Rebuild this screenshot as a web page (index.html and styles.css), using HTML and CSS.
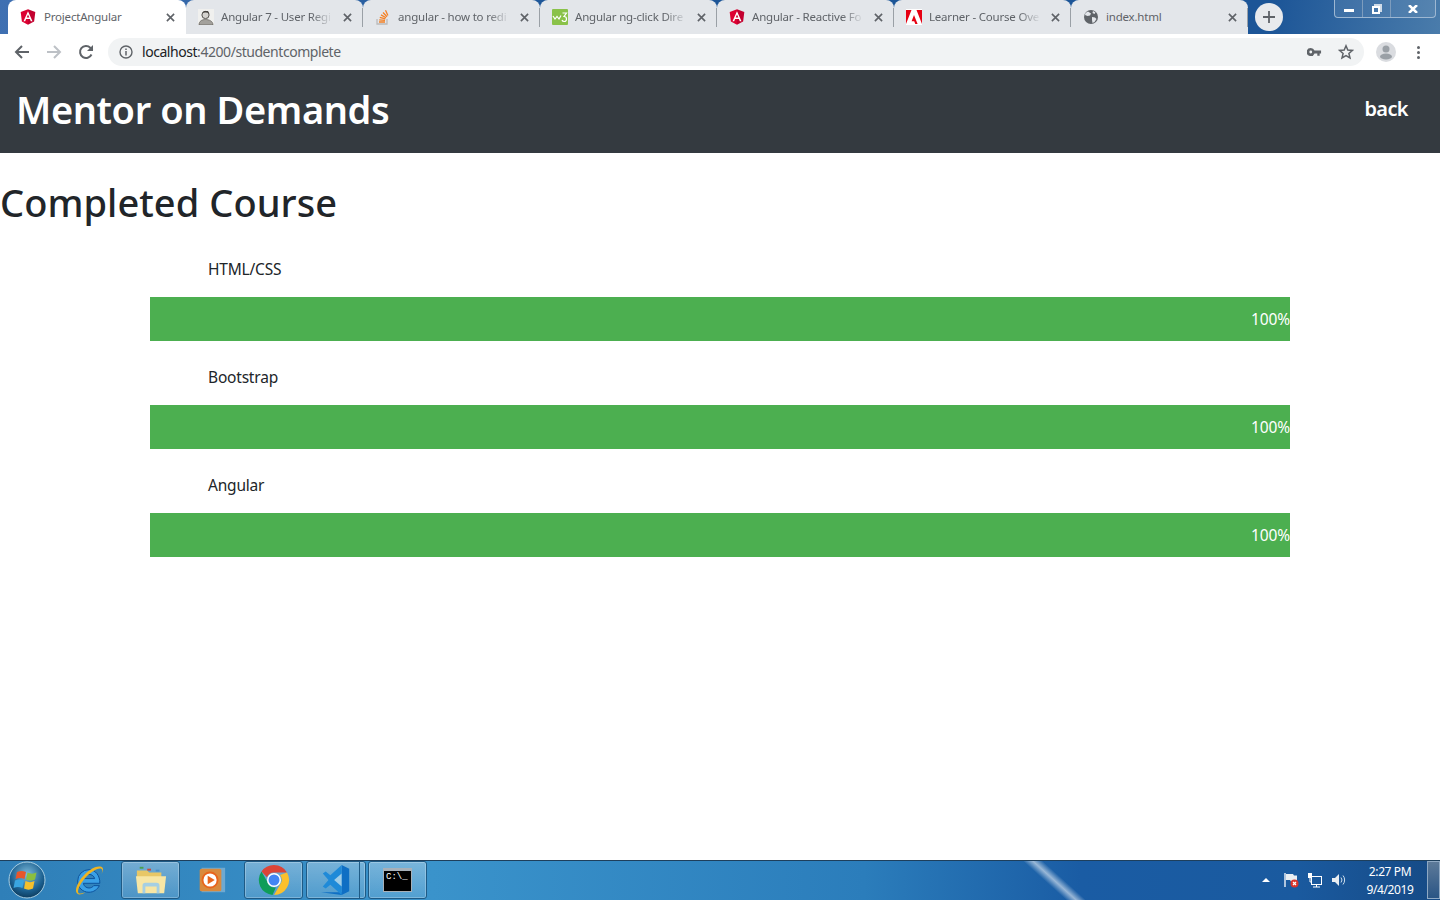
FILE: index.html
```html
<!DOCTYPE html>
<html lang="en">
<head>
    <meta charset="UTF-8">
    <title>ProjectAngular</title>
    <link rel="stylesheet" href="styles.css">
</head>
<body>

    <!-- Browser chrome -->
    <div class="tab-strip">
        <div class="tab active">
            <svg class="fav" viewBox="0 0 16 16"><path d="M8 .3 .7 2.9l1.2 9.500L8 15.700z" fill="#dd0031"/><path d="M8 .3v15.400l6.100-3.300 1.200-9.500z" fill="#c3002f"/><path fill-rule="evenodd" d="M8 2.200 3.500 12.200h1.700l.9-2.200h3.800l.9 2.200h1.700zM8 5.400l1.300 3.200H6.700z" fill="#fff"/></svg>
            <span class="tab-title">ProjectAngular</span>
            <svg class="tab-x" viewBox="0 0 10 10"><path d="M1 1l8 8M9 1 1 9"/></svg>
        </div>
        <div class="tab">
            <svg class="fav" viewBox="0 0 16 16"><rect width="16" height="16" fill="#f0f0ee"/><circle cx="7.5" cy="6" r="3.6" fill="#d5d3cf" stroke="#55524e"/><path d="M4 4.500 6 2h4l1.500 3-2-1.500H6z" fill="#46433f"/><path d="M1 16c0-4 3-5.500 6.500-5.500S15 12 15 16z" fill="#a3a19c" stroke="#55524e" stroke-width=".6"/></svg>
            <span class="tab-title fade">Angular 7 - User Regi</span>
            <svg class="tab-x" viewBox="0 0 10 10"><path d="M1 1l8 8M9 1 1 9"/></svg>
        </div>
        <div class="tab">
            <svg class="fav" viewBox="0 0 16 16"><path d="M2 10v5h10v-5" fill="none" stroke="#bcbbbb" stroke-width="1.300"/><path d="M4 13h6M4.200 10.800l5.800.6M4.800 8.400l5.600 1.500M6 5.900l5 2.800M8 3.500l4 4.200M10.500 1.200l2.400 5.300" fill="none" stroke="#f48024" stroke-width="1.300"/></svg>
            <span class="tab-title fade">angular - how to redi</span>
            <svg class="tab-x" viewBox="0 0 10 10"><path d="M1 1l8 8M9 1 1 9"/></svg>
        </div>
        <div class="tab">
            <svg class="fav" viewBox="0 0 16 16"><rect width="16" height="16" rx="1" fill="#8ac249"/><path d="M1 7l2 3 2-2.500L7 10l2-3.500M10.500 4h4l-2.500 3.500c2 0 2.500 1.200 2.500 2.500s-1 2.500-2.300 2.500-2-.8-2.200-1.500" fill="none" stroke="#fff" stroke-width="1.200"/></svg>
            <span class="tab-title fade">Angular ng-click Dire</span>
            <svg class="tab-x" viewBox="0 0 10 10"><path d="M1 1l8 8M9 1 1 9"/></svg>
        </div>
        <div class="tab">
            <svg class="fav" viewBox="0 0 16 16"><path d="M8 .3 .7 2.900l1.200 9.500L8 15.700z" fill="#dd0031"/><path d="M8 .3v15.400l6.100-3.300 1.200-9.500z" fill="#c3002f"/><path fill-rule="evenodd" d="M8 2.200 3.500 12.200h1.700l.9-2.200h3.800l.9 2.200h1.700zM8 5.400l1.300 3.200H6.700z" fill="#fff"/></svg>
            <span class="tab-title fade">Angular - Reactive Fo</span>
            <svg class="tab-x" viewBox="0 0 10 10"><path d="M1 1l8 8M9 1 1 9"/></svg>
        </div>
        <div class="tab">
            <svg class="fav" viewBox="0 0 16 16"><rect width="16" height="16" fill="#fff"/><path d="M0 1h5.500L0 15zM16 1h-5.500L16 15zM8 6l3.600 9H9.300L8.200 12.300H5.600z" fill="#e60012"/></svg>
            <span class="tab-title fade">Learner - Course Ove</span>
            <svg class="tab-x" viewBox="0 0 10 10"><path d="M1 1l8 8M9 1 1 9"/></svg>
        </div>
        <div class="tab">
            <svg class="fav" viewBox="0 0 16 16"><circle cx="8" cy="8" r="7" fill="#5f6368"/><path d="M5 2.500 8 4.500 7 6.500 4.500 7 2 6l.5-2zM9 8l3 .5 1.500 1.500-2 3-2 1-.5-3zM10 2l2.500 1.500-1 1.500L9.500 4z" fill="#e3e6ea"/></svg>
            <span class="tab-title">index.html</span>
            <svg class="tab-x" viewBox="0 0 10 10"><path d="M1 1l8 8M9 1 1 9"/></svg>
        </div>
        <div class="new-tab">
            <svg viewBox="0 0 12 12"><path d="M6 0v12M0 6h12"/></svg>
        </div>
        <div class="win-controls">
            <div class="win-btn min"><span class="min-bar"></span></div>
            <div class="win-btn restore"><span class="restore-box"></span></div>
            <div class="win-btn close">
                <svg viewBox="0 0 10 8"><path d="M1 0l8 8M9 0 1 8"/></svg>
            </div>
        </div>
    </div>

    <div class="toolbar">
        <svg class="tool-icon" viewBox="0 0 16 16"><path d="M15 8H2M8 2 2 8l6 6" fill="none" stroke="#5f6368" stroke-width="2"/></svg>
        <svg class="tool-icon" viewBox="0 0 16 16"><path d="M1 8h13M8 2l6 6-6 6" fill="none" stroke="#bdc1c6" stroke-width="2"/></svg>
        <svg class="tool-icon" viewBox="0 0 16 16"><path d="M13.500 10.500A6 6 0 1 1 12.300 3.700L14.500 6" fill="none" stroke="#5f6368" stroke-width="2"/><path d="M15 1v6H9z" fill="#5f6368"/></svg>
        <div class="omnibox">
            <svg class="info" viewBox="0 0 14 14"><circle cx="7" cy="7" r="6" fill="none" stroke="#5f6368" stroke-width="1.400"/><path d="M7 6v4.500M7 3.400v1.500" stroke="#5f6368" stroke-width="1.500"/></svg>
            <span class="url"><span class="host">localhost</span>:4200/studentcomplete</span>
            <svg class="key" viewBox="0 0 16 10"><path fill-rule="evenodd" d="M4 .7a4.300 4.300 0 1 0 4 5.800h3v2.500h2.500V6.500H15V3.500H8A4.300 4.300 0 0 0 4 .7zM4 3.500a1.500 1.500 0 1 1 0 3 1.500 1.500 0 0 1 0-3z" fill="#5f6368"/></svg>
            <svg class="star" viewBox="0 0 16 16"><path d="M8 1.800 9.800 6l4.600.4-3.500 3 1.100 4.500L8 11.500l-4 2.400 1.100-4.500-3.500-3L6.200 6z" fill="none" stroke="#5f6368" stroke-width="1.500"/></svg>
        </div>
        <div class="avatar">
            <svg viewBox="0 0 20 20"><circle cx="10" cy="10" r="10" fill="#dadce0"/><circle cx="10" cy="7" r="3.500" fill="#9aa0a6"/><ellipse cx="10" cy="14.500" rx="6" ry="3" fill="#9aa0a6"/></svg>
        </div>
        <div class="kebab"><i></i><i></i><i></i></div>
    </div>

    <!-- Page -->
    <nav class="navbar">
        <a class="brand">Mentor on Demands</a>
        <a class="back">back</a>
    </nav>

    <main class="content">
        <h1>Completed Course</h1>
        <div class="course-list">
            <div class="course">
                <p class="course-name">HTML/CSS</p>
                <div class="progress"><div class="progress-bar" style="width: 100%">100%</div></div>
            </div>
            <div class="course">
                <p class="course-name">Bootstrap</p>
                <div class="progress"><div class="progress-bar" style="width: 100%">100%</div></div>
            </div>
            <div class="course">
                <p class="course-name">Angular</p>
                <div class="progress"><div class="progress-bar" style="width: 100%">100%</div></div>
            </div>
        </div>
    </main>

    <!-- Windows taskbar -->
    <div class="taskbar">
        <div class="tb-start">
            <svg viewBox="0 0 38 38">
                <defs>
                    <radialGradient id="orb" cx="50%" cy="35%" r="65%"><stop offset="0" stop-color="#7fbcdc"/><stop offset=".7" stop-color="#1b5f8f"/><stop offset="1" stop-color="#0d3c5e"/></radialGradient>
                </defs>
                <circle cx="19" cy="19" r="18" fill="url(#orb)" stroke="#a9cfe3" stroke-width="1"/>
                <path d="M9 11c3-1.500 6-1.500 9 0l-1.500 7c-3-1.500-6-1.500-9 0z" fill="#e8562a"/>
                <path d="M19.500 11.500c3 1.500 6 1.500 9 0l-1.500 7c-3 1.500-6 1.500-9 0z" fill="#8bbf3f"/>
                <path d="M7 19.500c3-1.500 6-1.500 9 0L14.500 27c-3-1.500-6-1.500-9 0z" fill="#3aa5e0"/>
                <path d="M17.500 20c3 1.500 6 1.500 9 0L25 27.500c-3 1.500-6 1.500-9 0z" fill="#f5c02c"/>
            </svg>
        </div>
        <div class="tb-item ie">
            <svg viewBox="0 0 34 34"><path fill-rule="evenodd" d="M17 6a12 12 0 0 0-12 12c0 7 5 12 12 12 5 0 9-3 11-7h-6c-1 1.500-3 2.500-5 2.500-3 0-5.500-2-6-5h17.500c.3-8-4.500-14.500-11.500-14.500zM11 15.500c.5-2.500 3-4.500 6-4.500s5.500 2 6 4.500z" fill="#3aa0e6" stroke="#0b4f9a"/><path d="M30 3c-5-2-14 3-21 12C4 22 1 29 5 32c2 1 5 0 8-2-3 1-6 2-7 1-2-2 1-9 6-15C18 9 26 4 30 5c2 1 1 4 0 6 2-3 3-7 0-8z" fill="#eeb422"/></svg>
        </div>
        <div class="tb-item open folder">
            <svg viewBox="0 0 34 34"><path d="M2 7h11l2 2h13v6H2z" fill="#e8c766"/><rect x="5" y="3" width="4" height="2" fill="#4aa14a"/><rect x="13" y="5" width="4" height="2" fill="#c94a3a"/><rect x="22" y="6" width="4" height="2" fill="#4a90c9"/><path d="M1 13h32l-2 18H3z" fill="#f7e6a5"/><path d="M8 31v-8q0-3 3-3h12q3 0 3 3v8h-3v-7H11v7z" fill="#a5cfe3"/></svg>
        </div>
        <div class="tb-item wmp">
            <svg viewBox="0 0 34 34"><rect x="7" y="4" width="25" height="26" fill="#6fa9d0"/><rect x="5" y="5" width="23" height="24" rx="2" fill="#d98a3d"/><circle cx="16" cy="17" r="9" fill="#e8641c"/><circle cx="16" cy="17" r="7" fill="#fff"/><path d="M13.500 12.500v9l7.500-4.500z" fill="#e8641c"/></svg>
        </div>
        <div class="tb-item open chrome">
            <svg viewBox="0 0 32 32"><path d="M16 1a15 15 0 0 1 13 7.500H16a7.500 7.500 0 0 0-7 4.800L3.500 7.500A15 15 0 0 1 16 1z" fill="#db4437"/><path d="M29 8.500A15 15 0 0 1 16 31l6.500-11.200A7.500 7.500 0 0 0 22 11z" fill="#fbc02d"/><path d="M3.500 7.500 9.800 18.700a7.500 7.500 0 0 0 8 4.800L14.500 31A15 15 0 0 1 3.500 7.500z" fill="#0f9d58"/><circle cx="16" cy="16" r="7" fill="#fff"/><circle cx="16" cy="16" r="5.500" fill="#4285f4"/></svg>
        </div>
        <div class="tb-item open vscode">
            <svg viewBox="0 0 34 34"><path d="M23 1l8 4v24l-8 4-22-3 22 0z" fill="#0f6fc4"/><path d="M23 1v32L11 22l-5 4-3-2 6-7-6-7 3-2 5 4z" fill="#1f8ad8"/><path d="M23 10l-8 7 8 7z" fill="#9fcde8"/></svg>
            <span class="stack"></span>
        </div>
        <div class="tb-item open cmd">
            <div class="cmd-win"><span class="cmd-text">C:\_</span></div>
        </div>

        <div class="tray">
            <svg class="tray-arrow" viewBox="0 0 8 4"><path d="M4 0l4 4H0z" fill="#fff"/></svg>
            <svg class="tray-icon" viewBox="0 0 16 16"><path d="M2 1v14" stroke="#fff" stroke-width="1.300"/><path d="M3 2h7l1 1.500h3v6H8L7 8H3z" fill="#e9eef2"/><circle cx="11.500" cy="11.500" r="4" fill="#d9342b"/><path d="M10 10l3 3M13 10l-3 3" stroke="#fff" stroke-width="1.200"/></svg>
            <svg class="tray-icon" viewBox="0 0 16 16"><rect x="4.500" y="4.500" width="10" height="8" fill="none" stroke="#fff"/><path d="M6 15h7M9.500 13v2" stroke="#fff"/><rect x="1" y="1" width="4" height="5" fill="#fff"/><path d="M3 6v4h1" stroke="#fff" fill="none"/></svg>
            <svg class="tray-icon" viewBox="0 0 16 16"><path d="M1 6h3l4-4v12l-4-4H1z" fill="#e9eef2"/><path d="M10 5.500a4 4 0 0 1 0 5M12 3.500a7 7 0 0 1 0 9" fill="none" stroke="#cfe0ee"/></svg>
            <div class="clock"><span>2:27 PM</span><span>9/4/2019</span></div>
            <div class="show-desktop"></div>
        </div>
    </div>

</body>
</html>
```

FILE: styles.css
```css
html, body {
    height: 100%;
}
body {
    font-family: "Noto Sans", "Open Sans", sans-serif;
    margin: 0;
    padding: 0;
    height: 100vh;
    overflow: hidden;
    display: flex;
    flex-direction: column;
    background-color: #fff;
    color: #212529;
}

/* tabs */
.tab-strip {
    height: 34px;
    flex: none;
    display: flex;
    padding-left: 8px;
    background: linear-gradient(100deg, #3f70b2 0, #1c5597 40%, #1c5597 88%, #4a7cab 100%);
}
.tab {
    width: 177px;
    height: 34px;
    box-sizing: border-box;
    display: flex;
    align-items: center;
    padding: 0 11px 0 12px;
    background-color: #e3e6ea;
    border-radius: 8px 8px 0 0;
    position: relative;
    color: #5f6368;
    font-size: 11.5px;
    letter-spacing: -0.2px;
}
.tab.active {
    width: 178px;
    background-color: #fff;
}
.tab::after {
    content: "";
    position: absolute;
    right: 0;
    top: 8px;
    height: 19px;
    width: 1px;
    background-color: #9aa0a6;
}
.tab.active::after, .tab:last-of-type::after {
    display: none;
}
.fav {
    width: 16px;
    height: 16px;
    flex: none;
    margin-right: 7px;
}
.active .fav {
    margin-right: 8px;
}
.tab-title {
    flex: 1;
    white-space: nowrap;
    overflow: hidden;
    padding-bottom: 2px;
}
.tab-title.fade {
    -webkit-mask-image: linear-gradient(90deg, #000 80%, transparent 100%);
    mask-image: linear-gradient(90deg, #000 80%, transparent 100%);
}
.tab-x {
    width: 9px;
    height: 9px;
    flex: none;
    margin-left: 10px;
    fill: none;
    stroke: #5f6368;
    stroke-width: 1.8;
}
.new-tab {
    width: 28px;
    height: 28px;
    margin: 3px 0 0 7px;
    border-radius: 50%;
    background-color: #e8eaed;
    display: flex;
    align-items: center;
    justify-content: center;
}
.new-tab svg {
    width: 12px;
    height: 12px;
    fill: none;
    stroke: #5f6368;
    stroke-width: 1.8;
}
.win-controls {
    margin-left: auto;
    margin-right: 4px;
    width: 102px;
    height: 18px;
    box-sizing: border-box;
    display: flex;
    border: 1px solid #9db7d2;
    border-top: none;
    border-radius: 0 0 4px 4px;
    background-color: rgba(255, 255, 255, 0.08);
}
.win-btn {
    display: flex;
    align-items: center;
    justify-content: center;
    height: 100%;
    box-sizing: border-box;
    border-right: 1px solid #7d9cbd;
}
.win-btn.min, .win-btn.restore {
    width: 28px;
}
.win-btn.close {
    flex: 1;
    border-right: none;
}
.min-bar {
    width: 10px;
    height: 3px;
    background-color: #fff;
    margin-top: 4px;
}
.restore-box {
    width: 4px;
    height: 4px;
    margin: 3px 2px 0 0;
    border: 2px solid #fff;
    box-shadow: 2px -2px 0 0 #cfdbe8;
}
.win-btn.close svg {
    width: 10px;
    height: 8px;
    fill: none;
    stroke: #fff;
    stroke-width: 2.5;
}

/* toolbar */
.toolbar {
    height: 36px;
    flex: none;
    box-sizing: border-box;
    display: flex;
    align-items: center;
    background-color: #fff;
    padding: 0 0 0 14px;
}
.tool-icon {
    width: 16px;
    height: 16px;
    flex: none;
    margin-right: 16px;
}
.omnibox {
    width: 1256px;
    height: 28px;
    margin-left: -2px;
    flex: none;
    box-sizing: border-box;
    display: flex;
    align-items: center;
    padding: 0 10px 0 11px;
    border-radius: 14px;
    background-color: #f1f3f4;
    font-size: 14px;
    letter-spacing: -0.45px;
}
.info {
    width: 14px;
    height: 14px;
    margin-right: 9px;
}
.url {
    flex: 1;
    color: #5f6368;
    padding-bottom: 1px;
}
.host {
    color: #202124;
}
.key {
    width: 15px;
    height: 10px;
    margin-right: 16px;
}
.star {
    width: 16px;
    height: 16px;
}
.avatar {
    width: 20px;
    height: 20px;
    margin-left: 12px;
}
.avatar svg {
    display: block;
    width: 20px;
    height: 20px;
}
.kebab {
    margin-left: 21px;
    display: flex;
    flex-direction: column;
    gap: 2px;
}
.kebab i {
    display: block;
    width: 3px;
    height: 3px;
    border-radius: 50%;
    background-color: #5f6368;
}

/* page */
.navbar {
    height: 83px;
    flex: none;
    box-sizing: border-box;
    display: flex;
    align-items: center;
    justify-content: space-between;
    padding: 0 32px 5px 16px;
    background-color: #343a40;
    color: #fff;
}
.brand {
    font-size: 38px;
    font-weight: 600;
    letter-spacing: -0.4px;
}
.back {
    font-size: 20px;
    font-weight: 600;
    letter-spacing: -0.6px;
    margin-bottom: 2px;
}
.content {
    flex: 1;
    min-height: 0;
}
h1 {
    margin: 21px 0 0 0;
    font-size: 38px;
    font-weight: 500;
    line-height: 56px;
    letter-spacing: 0.05px;
}
.course-list {
    width: 1140px;
    margin: 19px auto 0;
}
.course {
    margin-bottom: 16px;
}
.course-name {
    margin: 0;
    padding-left: 58px;
    height: 48px;
    line-height: 40px;
    font-size: 15.5px;
    letter-spacing: -0.2px;
}
.progress {
    height: 44px;
    background-color: #f1f1f1;
}
.progress-bar {
    height: 100%;
    background-color: #4caf50;
    color: #fff;
    text-align: right;
    line-height: 44px;
    font-size: 15.5px;
    letter-spacing: -0.1px;
}

/* taskbar */
.taskbar {
    height: 40px;
    flex: none;
    box-sizing: border-box;
    display: flex;
    align-items: stretch;
    padding-bottom: 1px;
    position: relative;
    overflow: hidden;
    background: linear-gradient(90deg, #2f7fb8 0, #3a93cb 30%, #2b7dbb 60%, #1a5ca4 75%, #1a5a9f 90%, #164a85 100%);
    border-top: 1px solid #1e3f5c;
}
.taskbar::before {
    content: "";
    position: absolute;
    left: 1045px;
    top: 0;
    width: 20px;
    height: 40px;
    transform: skewX(48deg);
    background: linear-gradient(90deg, transparent, rgba(255, 255, 255, 0.55), transparent);
}
.tb-start {
    width: 54px;
    flex: none;
    display: flex;
    align-items: center;
    justify-content: center;
}
.tb-start svg {
    width: 38px;
    height: 38px;
}
.tb-item {
    width: 59px;
    flex: none;
    box-sizing: border-box;
    display: flex;
    align-items: center;
    justify-content: center;
    position: relative;
}
.tb-item svg {
    width: 32px;
    height: 32px;
}
.tb-item.open {
    border: 1px solid #1e5a85;
    border-radius: 3px;
    background: linear-gradient(180deg, rgba(255, 255, 255, 0.32), rgba(255, 255, 255, 0.12));
    box-shadow: inset 0 0 0 1px rgba(255, 255, 255, 0.25);
}
.tb-item.ie {
    margin-left: 5px;
}
.tb-item.folder {
    margin-left: 3px;
}
.tb-item.wmp {
    margin-left: 1px;
}
.tb-item.chrome {
    margin-left: 4px;
}
.tb-item.vscode {
    margin-left: 3px;
    width: 60px;
}
.stack {
    position: absolute;
    right: 0;
    top: 0;
    bottom: 0;
    width: 5px;
    border-left: 1px solid #1e5a85;
}
.tb-item.cmd {
    margin-left: 2px;
}
.cmd-win {
    width: 29px;
    height: 24px;
    box-sizing: border-box;
    background-color: #000;
    border: 1px solid #a7b0b8;
    border-top-width: 3px;
    padding: 1px 2px;
}
.cmd-text {
    display: block;
    color: #fff;
    font-family: "Liberation Mono", monospace;
    font-size: 9px;
    line-height: 10px;
}
.tray {
    margin-left: auto;
    display: flex;
    align-items: center;
    color: #fff;
}
.tray-arrow {
    width: 8px;
    height: 4px;
    margin-right: 13px;
}
.tray-icon {
    width: 16px;
    height: 16px;
    margin-right: 8px;
}
.clock {
    width: 60px;
    margin-left: 5px;
    padding-top: 1px;
    display: flex;
    flex-direction: column;
    align-items: center;
    font-size: 12px;
    line-height: 18px;
    letter-spacing: -0.4px;
}
.show-desktop {
    width: 13px;
    height: 100%;
    margin-left: 7px;
    border: 1px solid #8fa9c4;
    box-sizing: border-box;
    background: linear-gradient(180deg, #5d7a99, #2a5585);
}
```
